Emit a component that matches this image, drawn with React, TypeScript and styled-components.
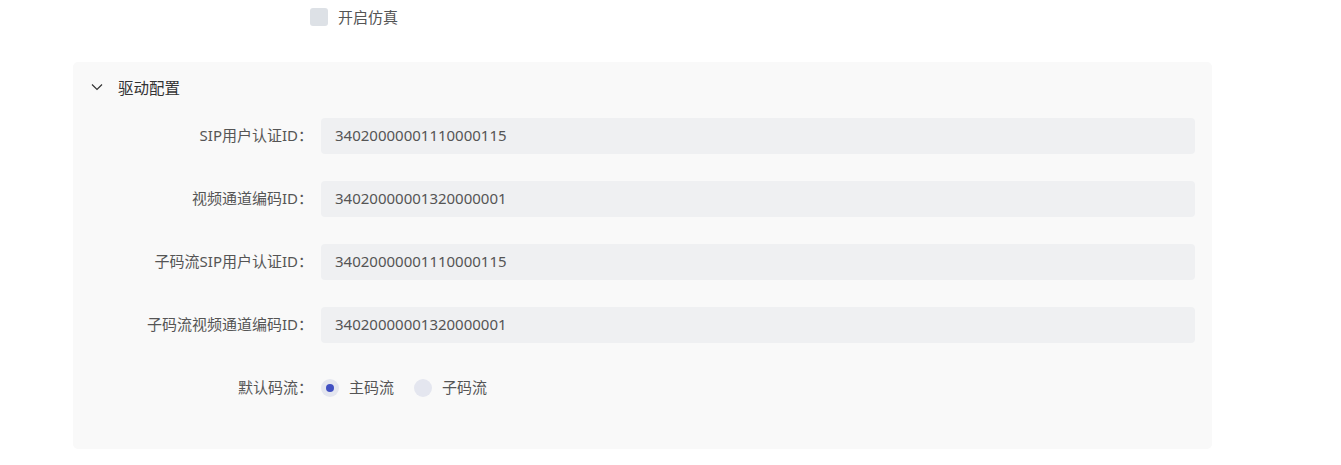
import React, { useState } from 'react';
import styled, { createGlobalStyle } from 'styled-components';

const GlobalStyle = createGlobalStyle`
  body {
    margin: 0;
    background: #fff;
    font-family: "Noto Sans", "Noto Sans CJK SC", sans-serif;
    font-size: 15px;
    color: #555;
  }
`;

const Page = styled.div`
  width: 1341px;
  height: 465px;
  padding: 0 0 0 73px;
  box-sizing: border-box;
`;

const SimRow = styled.label`
  display: flex;
  align-items: center;
  gap: 10px;
  height: 34px;
  padding-left: 237px;
  cursor: pointer;
  color: #555;
  line-height: 1;
`;

const CheckBox = styled.span`
  width: 18px;
  height: 18px;
  border-radius: 3px;
  background: #dde1e6;
`;

const Panel = styled.section`
  margin-top: 28px;
  width: 1139px;
  height: 387px;
  background: #f9f9f9;
  border-radius: 5px;
  box-sizing: border-box;
  padding-top: 12px;
`;

const PanelHeader = styled.div`
  display: flex;
  align-items: center;
  height: 26px;
  padding-left: 18px;
  gap: 15px;
  color: #333;
  font-size: 15.5px;
`;

const FormBody = styled.div`
  display: flex;
  flex-direction: column;
  gap: 27px;
  padding-top: 18px;
  padding-right: 17px;
`;

const Row = styled.div`
  display: flex;
  align-items: center;
  height: 36px;
  line-height: 1.3;
`;

const Label = styled.div`
  width: 248px;
  padding-right: 8px;
  box-sizing: border-box;
  text-align: right;
  color: #555;
  white-space: nowrap;
`;

const Field = styled.div`
  flex: 1;
  height: 36px;
  display: flex;
  align-items: center;
  padding-left: 14px;
  background: #eff0f2;
  border-radius: 4px;
  color: #555;
`;

const RadioGroup = styled.div`
  display: flex;
  align-items: center;
  gap: 20px;
`;

const RadioOption = styled.label`
  display: flex;
  align-items: center;
  gap: 10px;
  cursor: pointer;
  color: #555;
`;

const RadioDot = styled.span<{ $checked: boolean }>`
  width: 18px;
  height: 18px;
  border-radius: 50%;
  background: #e4e6ef;
  display: flex;
  align-items: center;
  justify-content: center;
  &::after {
    content: '';
    width: 8px;
    height: 8px;
    border-radius: 50%;
    background: ${p => (p.$checked ? '#4150c2' : 'transparent')};
  }
`;

const fields = [
  { label: 'SIP用户认证ID：', value: '34020000001110000115' },
  { label: '视频通道编码ID：', value: '34020000001320000001' },
  { label: '子码流SIP用户认证ID：', value: '34020000001110000115' },
  { label: '子码流视频通道编码ID：', value: '34020000001320000001' },
];

const Chevron = () => (
  <svg width="12" height="8" viewBox="0 0 12 8" fill="none">
    <path d="M1 1.5 L6 6.5 L11 1.5" stroke="#333" strokeWidth="1.2" />
  </svg>
);

const App: React.FC = () => {
  const [stream, setStream] = useState('main');
  return (
    <Page>
      <GlobalStyle />
      <SimRow>
        <CheckBox />
        开启仿真
      </SimRow>
      <Panel>
        <PanelHeader>
          <Chevron />
          驱动配置
        </PanelHeader>
        <FormBody>
          {fields.map(f => (
            <Row key={f.label}>
              <Label>{f.label}</Label>
              <Field>{f.value}</Field>
            </Row>
          ))}
          <Row>
            <Label>默认码流：</Label>
            <RadioGroup>
              <RadioOption onClick={() => setStream('main')}>
                <RadioDot $checked={stream === 'main'} />
                主码流
              </RadioOption>
              <RadioOption onClick={() => setStream('sub')}>
                <RadioDot $checked={stream === 'sub'} />
                子码流
              </RadioOption>
            </RadioGroup>
          </Row>
        </FormBody>
      </Panel>
    </Page>
  );
};

export default App;
